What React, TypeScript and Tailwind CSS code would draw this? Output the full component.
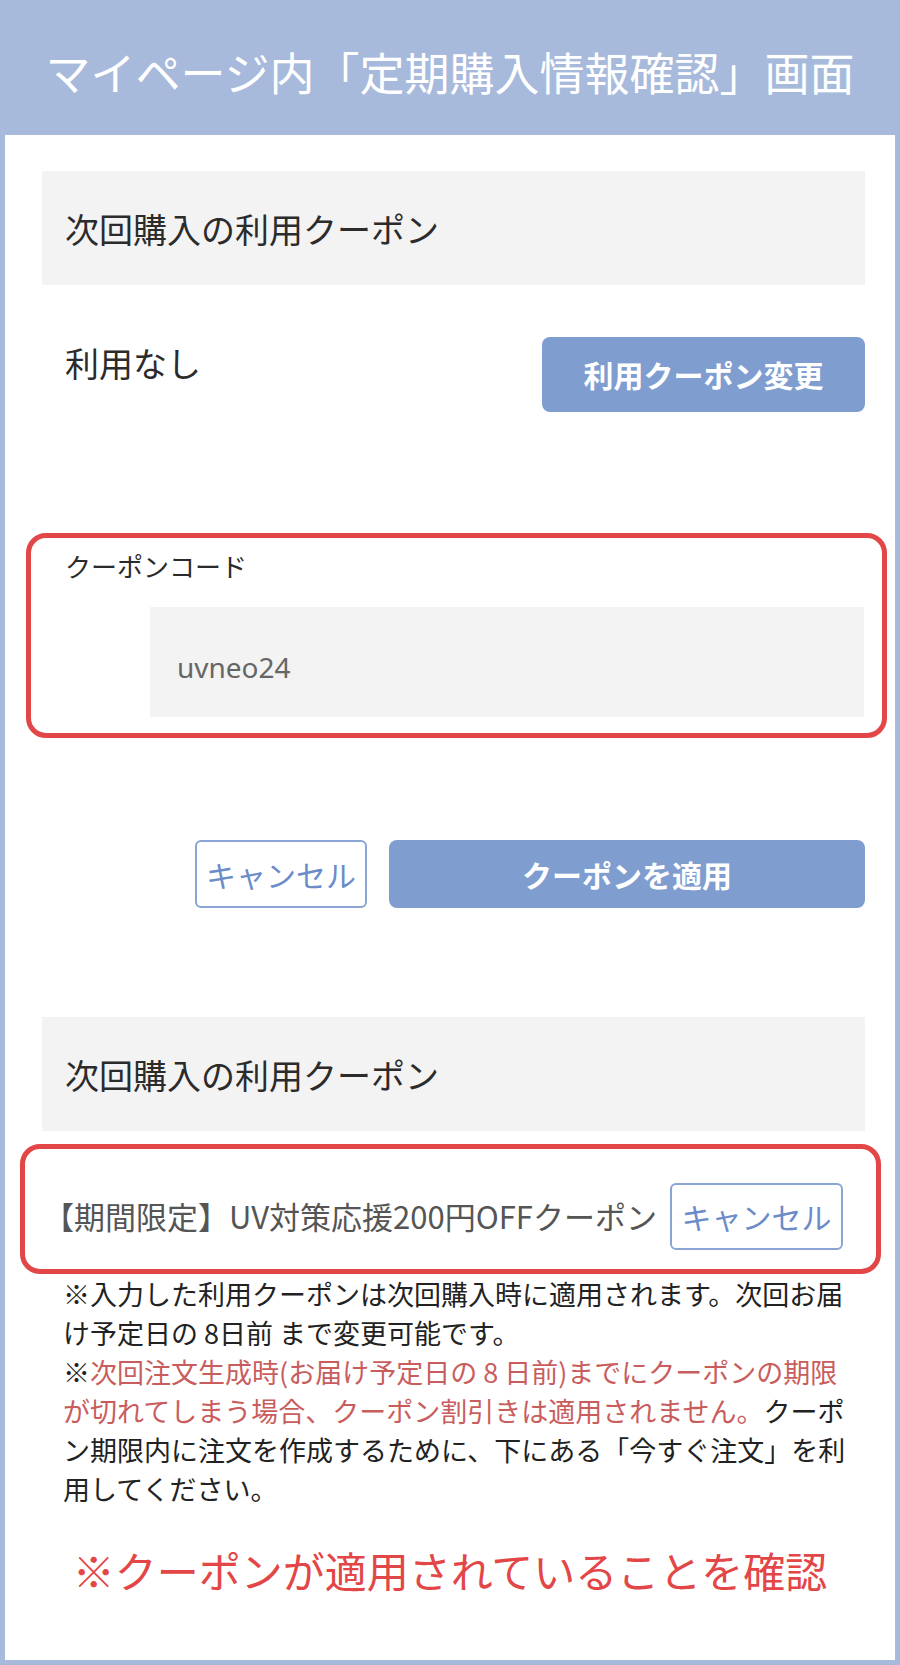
const SectionTitle = ({ title }: { title: string }) => (
  <div className="ml-[37px] mr-[30px] h-[114px] bg-[#f3f3f3] flex items-center pl-[23px]">
    <span className="text-[34px] text-[#2b2b2b]">{title}</span>
  </div>
);

export default function App() {
  return (
    <div className="w-[900px] h-[1665px] bg-[#a8badc] flex flex-col px-[5px] pb-[5px] font-['Noto_Sans_CJK_JP','Noto_Sans',sans-serif]">
      {/* Header */}
      <div className="h-[135px] flex items-center justify-center pt-[8px]">
        <h1 className="text-[45px] text-white leading-none">マイページ内「定期購入情報確認」画面</h1>
      </div>

      {/* White panel */}
      <div className="flex-1 bg-white flex flex-col pt-[36px]">
        <SectionTitle title="次回購入の利用クーポン" />

        {/* Current coupon row */}
        <div className="mt-[52px] ml-[60px] mr-[30px] flex items-start justify-between">
          <span className="text-[34px] leading-[51px] text-[#2b2b2b]">利用なし</span>
          <button className="w-[323px] h-[75px] rounded-[8px] bg-[#809dd0] text-white text-[30px] font-bold">
            利用クーポン変更
          </button>
        </div>

        {/* Coupon code input (highlighted) */}
        <div className="mt-[121px] ml-[21px] w-[861px] border-[5px] border-[#e34646] rounded-[20px] pt-[8px] pb-[16px]">
          <div className="pl-[34px] text-[26px] leading-[39px] text-[#2b2b2b]">クーポンコード</div>
          <div className="mt-[22px] ml-[119px] mr-[18px] h-[110px] bg-[#f3f3f3] flex items-center pl-[27px] pt-[10px]">
            <span className="text-[28px] text-[#666666] font-['Noto_Sans',sans-serif]">uvneo24</span>
          </div>
        </div>

        {/* Action buttons */}
        <div className="mt-[102px] pr-[30px] flex justify-end gap-[22px]">
          <button className="w-[172px] h-[68px] border-2 border-[#8aa4d4] rounded-[6px] bg-white text-[#6b8bc9] text-[30px]">
            キャンセル
          </button>
          <button className="w-[476px] h-[68px] rounded-[8px] bg-[#809dd0] text-white text-[30px] font-bold">
            クーポンを適用
          </button>
        </div>

        <div className="mt-[109px]">
          <SectionTitle title="次回購入の利用クーポン" />
        </div>

        {/* Applied coupon (highlighted) */}
        <div className="mt-[13px] ml-[15px] w-[861px] h-[130px] border-[5px] border-[#e34646] rounded-[20px] flex items-center justify-between pl-[18px] pr-[33px] pt-[14px]">
          <span className="text-[31px] text-[#555555] whitespace-nowrap">【期間限定】UV対策応援200円OFFクーポン</span>
          <button className="w-[173px] h-[67px] border-2 border-[#8aa4d4] rounded-[6px] bg-white text-[#6b8bc9] text-[30px]">
            キャンセル
          </button>
        </div>

        {/* Notes */}
        <div className="ml-[58px] w-[790px] text-[27px] leading-[39px] text-[#222222]">
          <p>※入力した利用クーポンは次回購入時に適用されます。次回お届け予定日の 8日前 まで変更可能です。</p>
          <p>
            ※<span className="text-[#c95d5d]">次回注文生成時(お届け予定日の 8 日前)までにクーポンの期限</span>
            <br />
            <span className="text-[#c95d5d]">が切れてしまう場合、クーポン割引きは適用されません。</span>クーポ
            <br />
            ン期限内に注文を作成するために、下にある「今すぐ注文」を利
            <br />
            用してください。
          </p>
        </div>

        <div className="mt-[30px] text-center text-[42px] leading-[63px] text-[#e34646]">
          ※クーポンが適用されていることを確認
        </div>
      </div>
    </div>
  );
}
